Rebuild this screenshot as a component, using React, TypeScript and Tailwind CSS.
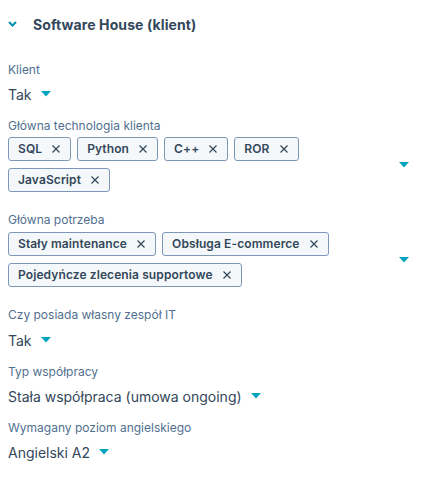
import React from 'react';

const FONT = { fontFamily: 'Inter, "Noto Sans", sans-serif' };

function Caret() {
  return (
    <svg width="10" height="6" viewBox="0 0 10 6" className="shrink-0">
      <path d="M0 0h10L5 5.5z" fill="#00a4bd" />
    </svg>
  );
}

function CloseIcon() {
  return (
    <svg width="8" height="8" viewBox="0 0 8 8" className="shrink-0">
      <path d="M0.5 0.5l7 7M7.5 0.5l-7 7" stroke="#33475b" strokeWidth="1.2" />
    </svg>
  );
}

function Tag({ label }: { label: string }) {
  return (
    <span className="h-6 flex items-center gap-[10px] pl-[9px] pr-[10px] bg-[#f5f8fa] border border-[#7c98b6] rounded-[3px] text-[12px] font-semibold text-[#33475b] tracking-[0.1px]">
      {label}
      <CloseIcon />
    </span>
  );
}

function Label({ children }: { children: React.ReactNode }) {
  return <div className="h-5 flex items-center text-[12px] text-[#516f90]">{children}</div>;
}

function Select({ value, className }: { value: string; className: string }) {
  return (
    <div className={`h-6 flex items-center gap-[9px] text-[14px] text-[#33475b] ${className}`}>
      <span>{value}</span>
      <Caret />
    </div>
  );
}

function TagField({ tags, className }: { tags: string[]; className: string }) {
  return (
    <div className={`flex items-center ${className}`}>
      <div className="flex-1 flex flex-wrap gap-x-[6px] gap-y-[7px]">
        {tags.map((t) => (
          <Tag key={t} label={t} />
        ))}
      </div>
      <Caret />
    </div>
  );
}

export default function App() {
  return (
    <div className="w-[432px] h-[480px] bg-white pl-2 pr-[23px] overflow-hidden" style={FONT}>
      <div className="h-12 flex items-center gap-4">
        <svg width="9" height="6" viewBox="0 0 9 6">
          <path d="M1 1l3.5 3.5L8 1" stroke="#0091ae" strokeWidth="2" fill="none" />
        </svg>
        <span className="text-[14px] font-bold text-[#33475b] tracking-[0.1px]">Software House (klient)</span>
      </div>

      <div className="mt-3">
        <Label>Klient</Label>
        <Select value="Tak" className="mt-0.5" />
      </div>

      <div className="mt-[10px]">
        <Label>Główna technologia klienta</Label>
        <TagField className="mt-px" tags={['SQL', 'Python', 'C++', 'ROR', 'JavaScript']} />
      </div>

      <div className="mt-[18px]">
        <Label>Główna potrzeba</Label>
        <TagField
          className="mt-0.5"
          tags={['Stały maintenance', 'Obsługa E-commerce', 'Pojedyńcze zlecenia supportowe']}
        />
      </div>

      <div className="mt-[18px]">
        <Label>Czy posiada własny zespół IT</Label>
        <Select value="Tak" className="mt-[3px]" />
      </div>

      <div className="mt-[10px]">
        <Label>Typ współpracy</Label>
        <Select value="Stała współpraca (umowa ongoing)" className="mt-0.5" />
      </div>

      <div className="mt-[10px]">
        <Label>Wymagany poziom angielskiego</Label>
        <Select value="Angielski A2" className="mt-0.5" />
      </div>
    </div>
  );
}
